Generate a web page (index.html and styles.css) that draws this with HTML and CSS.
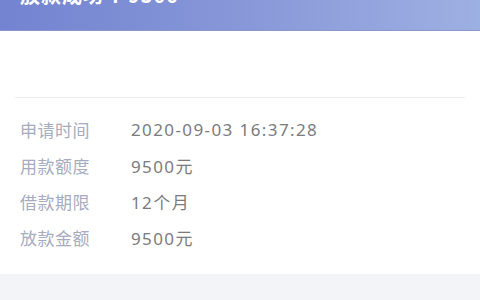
FILE: index.html
```html
<!DOCTYPE html>
<html lang="zh">
<head>
<meta charset="utf-8">
<link rel="stylesheet" href="styles.css">
</head>
<body>
<div class="page">
  <header class="hero">
    <div class="hero-title">放款成功 ¥ 9500</div>
  </header>
  <section class="card">
    <div class="card-top"></div>
    <div class="divider"></div>
    <dl class="info">
      <div class="row"><dt>申请时间</dt><dd>2020-09-03 16:37:28</dd></div>
      <div class="row"><dt>用款额度</dt><dd>9500元</dd></div>
      <div class="row"><dt>借款期限</dt><dd>12个月</dd></div>
      <div class="row"><dt>放款金额</dt><dd>9500元</dd></div>
    </dl>
  </section>
  <div class="footer"></div>
</div>
</body>
</html>
```
FILE: styles.css
```css
html, body {
  margin: 0;
  padding: 0;
  background: #ffffff;
}
.page {
  width: 480px;
  height: 300px;
  display: flex;
  flex-direction: column;
  overflow: hidden;
  font-family: "Noto Sans CJK SC", "Noto Sans", sans-serif;
}
.hero {
  height: 30px;
  flex: none;
  background: linear-gradient(90deg, #7383d0 0%, #8797d8 50%, #9db0e2 100%);
  border-bottom: 1px solid #8a97c8;
  box-shadow: 0 1px 3px rgba(120, 130, 170, 0.15);
  overflow: hidden;
  padding-left: 20px;
}
.hero-title {
  color: #ffffff;
  font-size: 20px;
  font-weight: 700;
  line-height: 20px;
  margin-top: -15px;
  letter-spacing: 1px;
}
.card {
  flex: none;
  height: 243px;
  padding: 0 15px 0 15px;
  background: #ffffff;
}
.card-top {
  height: 66px;
}
.divider {
  height: 1px;
  background: #ececef;
}
.info {
  margin: 13px 0 0 0;
  padding: 0 0 0 5px;
}
.row {
  display: flex;
  align-items: center;
  height: 36px;
}
.row dt {
  width: 111px;
  color: #a7abc0;
  font-size: 17px;
  letter-spacing: 0.5px;
}
.row dd {
  margin: 0;
  color: #7b7b7e;
  font-family: "Noto Sans", "Noto Sans CJK SC", sans-serif;
  font-size: 17px;
  letter-spacing: 1.4px;
}
.footer {
  flex: 1;
  background: #f3f4f7;
}
```
